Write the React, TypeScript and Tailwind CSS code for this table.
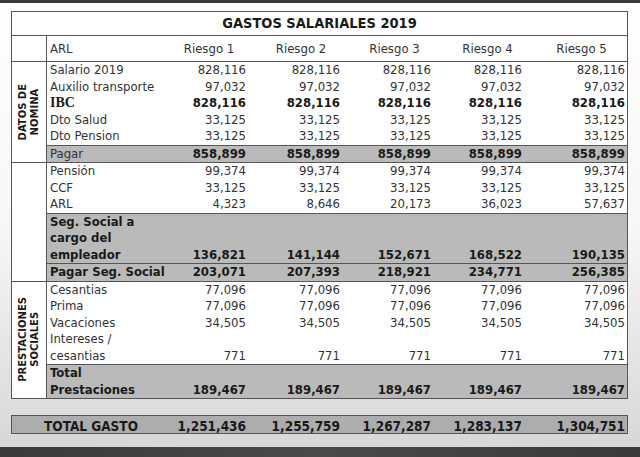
const FONT = "font-['DejaVu_Sans_Condensed','DejaVu_Sans',sans-serif] [font-stretch:condensed]"

type RowDef = {
  label: string[]
  values: string[]
  bold?: boolean
  fill?: boolean
  top?: boolean
  serif?: boolean
  boldValuesOnly?: boolean
}

const same = (v: string): string[] => [v, v, v, v, v]

const SECTIONS: { side: string[]; rows: RowDef[] }[] = [
  {
    side: ["DATOS DE", "NOMINA"],
    rows: [
      { label: ["Salario 2019"], values: same("828,116") },
      { label: ["Auxilio transporte"], values: same("97,032") },
      { label: ["IBC"], values: same("828,116"), bold: true, serif: true },
      { label: ["Dto Salud"], values: same("33,125") },
      { label: ["Dto Pension"], values: same("33,125") },
      { label: ["Pagar"], values: same("858,899"), boldValuesOnly: true, fill: true, top: true },
    ],
  },
  {
    side: [],
    rows: [
      { label: ["Pensión"], values: same("99,374") },
      { label: ["CCF"], values: same("33,125") },
      { label: ["ARL"], values: ["4,323", "8,646", "20,173", "36,023", "57,637"] },
      {
        label: ["Seg. Social a", "cargo del", "empleador"],
        values: ["136,821", "141,144", "152,671", "168,522", "190,135"],
        bold: true,
        fill: true,
        top: true,
      },
      {
        label: ["Pagar Seg. Social"],
        values: ["203,071", "207,393", "218,921", "234,771", "256,385"],
        bold: true,
        fill: true,
        top: true,
      },
    ],
  },
  {
    side: ["PRESTACIONES", "SOCIALES"],
    rows: [
      { label: ["Cesantias"], values: same("77,096") },
      { label: ["Prima"], values: same("77,096") },
      { label: ["Vacaciones"], values: same("34,505") },
      { label: ["Intereses /", "cesantias"], values: same("771") },
      { label: ["Total", "Prestaciones"], values: same("189,467"), bold: true, fill: true, top: true },
    ],
  },
]

const TOTALS = ["1,251,436", "1,255,759", "1,267,287", "1,283,137", "1,304,751"]

const COLS = "grid grid-cols-[113px_88px_94px_91px_91px_1fr]"

function Row({ row }: { row: RowDef }) {
  const valueWeight = row.bold || row.boldValuesOnly ? "font-bold text-[#1a1a1a]" : "text-[#333]"
  return (
    <div
      className={`${COLS} items-end leading-[16.5px] ${row.fill ? "bg-[#bababa]" : ""} ${
        row.top ? "border-t border-[#555]" : ""
      }`}
    >
      <div
        className={`pl-[3px] ${
          row.serif
            ? "font-['Liberation_Serif',serif] font-bold text-[14px] text-[#1a1a1a]"
            : row.bold
              ? "font-bold text-[#1a1a1a]"
              : "text-[#333]"
        }`}
      >
        {row.label.map((l, i) => (
          <div key={i} className="whitespace-nowrap">
            {l}
          </div>
        ))}
      </div>
      {row.values.map((v, i) => (
        <div key={i} className={`text-right pr-[2px] ${valueWeight}`}>
          {v}
        </div>
      ))}
    </div>
  )
}

export default function App() {
  return (
    <div
      className={`w-[640px] h-[457px] flex flex-col overflow-hidden bg-gradient-to-b from-white via-[#f7f7f7] to-[#d6d6d6] ${FONT} text-[13px]`}
    >
      <div className="h-[3px] bg-[#3a3a3a]" />

      <div className="flex-1 pl-[11px] pt-[8px]">
        <div className="w-[617px] border border-[#555] bg-white">
          {/* Title */}
          <div className="h-[24px] border-b border-[#555] flex items-center justify-center font-bold text-[14.5px] text-[#1a1a1a]">
            GASTOS SALARIALES 2019
          </div>

          {/* Header */}
          <div className="flex h-[26px] border-b border-[#555] bg-white">
            <div className="w-[35px] border-r border-[#555]" />
            <div className={`${COLS} flex-1 items-center text-[#333]`}>
              <div className="pl-[3px]">ARL</div>
              <div className="text-center pl-[10px]">Riesgo 1</div>
              <div className="text-center pl-[12px]">Riesgo 2</div>
              <div className="text-center pl-[14px]">Riesgo 3</div>
              <div className="text-center pl-[18px]">Riesgo 4</div>
              <div className="text-center pl-[12px]">Riesgo 5</div>
            </div>
          </div>

          {/* Sections */}
          {SECTIONS.map((sec, si) => (
            <div
              key={si}
              className={`flex ${si < SECTIONS.length - 1 ? "border-b border-[#555]" : ""}`}
            >
              <div className="w-[35px] border-r border-[#555] flex items-center justify-center">
                {sec.side.length > 0 && (
                  <div className="[writing-mode:vertical-rl] rotate-180 text-center font-['DejaVu_Sans',sans-serif] [font-stretch:normal] font-bold text-[10px] leading-[12px] text-[#1a1a1a]">
                    {sec.side.map((s, i) => (
                      <div key={i}>{s}</div>
                    ))}
                  </div>
                )}
              </div>
              <div className="flex-1">
                {sec.rows.map((r, ri) => (
                  <Row key={ri} row={r} />
                ))}
              </div>
            </div>
          ))}
        </div>

        {/* Total gasto */}
        <div className="w-[617px] mt-[16px] h-[19px] border border-[#555] bg-[#adadad] grid grid-cols-[148px_88px_94px_91px_91px_1fr] items-center font-bold text-[#1a1a1a] text-[13.5px]">
          <div className="text-center pl-[10px]">TOTAL GASTO</div>
          {TOTALS.map((v, i) => (
            <div key={i} className="text-right pr-[2px]">
              {v}
            </div>
          ))}
        </div>
      </div>

      <div className="h-[10px] bg-gradient-to-r from-[#3a3a3a] via-[#4a4a4a] to-[#3a3a3a]" />
    </div>
  )
}
